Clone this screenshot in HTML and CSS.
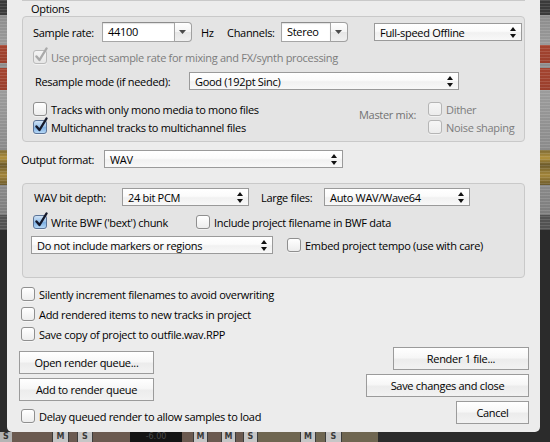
FILE: index.html
```html
<!DOCTYPE html>
<html>
<head>
<meta charset="utf-8">
<link rel="stylesheet" href="styles.css">
</head>
<body>
<div class="screen">
  <div class="bg-left"></div>
  <div class="bg-right"></div>
  <div class="bg-bottom">
    <span class="seg s-gray w12">S</span>
    <span class="seg s-brown w40"></span>
    <span class="seg s-btn w17">M</span>
    <span class="seg s-brown w8"></span>
    <span class="seg s-btn w16">S</span>
    <span class="seg s-brown w37"></span>
    <span class="seg s-black w52">-6.00</span>
    <span class="seg s-brown w11"></span>
    <span class="seg s-btn w15">M</span>
    <span class="seg s-brown w13"></span>
    <span class="seg s-btn w15">M</span>
    <span class="seg s-brown w7"></span>
    <span class="seg s-btn w15">S</span>
    <span class="seg s-olive w42"></span>
    <span class="seg s-btn w16">M</span>
    <span class="seg s-olive w9"></span>
    <span class="seg s-btn w17">S</span>
    <span class="seg s-olive w36"></span>
    <span class="seg s-dark grow"></span>
  </div>

  <div class="dialog">
    <div class="prev-box"></div>
    <div class="group-title">Options</div>
    <div class="group g-options">
      <div class="row r-sr">
        <span class="lbl l-sr">Sample rate:</span>
        <div class="combo c-sr">
          <span class="combo-field">44100</span>
          <span class="combo-btn"><svg width="7" height="4" viewBox="0 0 7 4"><path d="M0 0H7L3.5 4Z" fill="#4a4a4a"/></svg></span>
        </div>
        <span class="lbl l-hz">Hz</span>
        <span class="lbl l-ch">Channels:</span>
        <div class="combo c-ch">
          <span class="combo-field">Stereo</span>
          <span class="combo-btn"><svg width="7" height="4" viewBox="0 0 7 4"><path d="M0 0H7L3.5 4Z" fill="#4a4a4a"/></svg></span>
        </div>
        <div class="popup p-speed"><span class="popup-text">Full-speed Offline</span><svg class="updown" width="6" height="11" viewBox="0 0 6 11"><path d="M0 4L3 0L6 4Z M0 7L3 11L6 7Z" fill="#111"/></svg></div>
      </div>
      <div class="row r-use cbrow dis">
        <span class="cb checked dis"><svg class="check" width="14" height="16" viewBox="0 0 14 16"><path d="M2.5 9.5L5.5 13L12.5 1.5" fill="none" stroke="#a9a9a9" stroke-width="2.4" stroke-linecap="round" stroke-linejoin="round"/></svg></span>
        <span>Use project sample rate for mixing and FX/synth processing</span>
      </div>
      <div class="row r-rs">
        <span class="lbl l-rs">Resample mode (if needed):</span>
        <div class="popup p-rs"><span class="popup-text">Good (192pt Sinc)</span><svg class="updown" width="6" height="11" viewBox="0 0 6 11"><path d="M0 4L3 0L6 4Z M0 7L3 11L6 7Z" fill="#111"/></svg></div>
      </div>
      <div class="mixgrid">
        <div class="cbrow m1"><span class="cb"></span><span>Tracks with only mono media to mono files</span></div>
        <div class="master-lbl">Master mix:</div>
        <div class="cbrow dis m2"><span class="cb dis"></span><span>Dither</span></div>
        <div class="cbrow m3"><span class="cb checked"><svg class="check" width="14" height="16" viewBox="0 0 14 16"><path d="M2.5 9.5L5.5 13L12.5 1.5" fill="none" stroke="#14182a" stroke-width="2.4" stroke-linecap="round" stroke-linejoin="round"/></svg></span><span>Multichannel tracks to multichannel files</span></div>
        <div class="cbrow dis m4"><span class="cb dis"></span><span>Noise shaping</span></div>
      </div>
    </div>

    <div class="row r-out">
      <span class="lbl l-out">Output format:</span>
      <div class="popup p-out"><span class="popup-text">WAV</span><svg class="updown" width="6" height="11" viewBox="0 0 6 11"><path d="M0 4L3 0L6 4Z M0 7L3 11L6 7Z" fill="#111"/></svg></div>
    </div>

    <div class="group g-wav">
      <div class="row r-bd">
        <span class="lbl l-bd">WAV bit depth:</span>
        <div class="popup p-bd"><span class="popup-text">24 bit PCM</span><svg class="updown" width="6" height="11" viewBox="0 0 6 11"><path d="M0 4L3 0L6 4Z M0 7L3 11L6 7Z" fill="#111"/></svg></div>
        <span class="lbl l-lf">Large files:</span>
        <div class="popup p-lf"><span class="popup-text">Auto WAV/Wave64</span><svg class="updown" width="6" height="11" viewBox="0 0 6 11"><path d="M0 4L3 0L6 4Z M0 7L3 11L6 7Z" fill="#111"/></svg></div>
      </div>
      <div class="row r-bwf">
        <div class="cbrow w-bwf"><span class="cb checked"><svg class="check" width="14" height="16" viewBox="0 0 14 16"><path d="M2.5 9.5L5.5 13L12.5 1.5" fill="none" stroke="#14182a" stroke-width="2.4" stroke-linecap="round" stroke-linejoin="round"/></svg></span><span>Write BWF ('bext') chunk</span></div>
        <div class="cbrow"><span class="cb"></span><span>Include project filename in BWF data</span></div>
      </div>
      <div class="row r-mk">
        <div class="popup p-mk"><span class="popup-text">Do not include markers or regions</span><svg class="updown" width="6" height="11" viewBox="0 0 6 11"><path d="M0 4L3 0L6 4Z M0 7L3 11L6 7Z" fill="#111"/></svg></div>
        <div class="cbrow"><span class="cb"></span><span>Embed project tempo (use with care)</span></div>
      </div>
    </div>

    <div class="bottom">
      <div class="col-left">
        <div class="cbrow b1"><span class="cb"></span><span>Silently increment filenames to avoid overwriting</span></div>
        <div class="cbrow b2"><span class="cb"></span><span>Add rendered items to new tracks in project</span></div>
        <div class="cbrow b3"><span class="cb"></span><span>Save copy of project to outfile.wav.RPP</span></div>
        <button class="btn bl1">Open render queue...</button>
        <button class="btn bl2">Add to render queue</button>
        <div class="cbrow b4"><span class="cb"></span><span>Delay queued render to allow samples to load</span></div>
      </div>
      <div class="col-right">
        <button class="btn br1">Render 1 file...</button>
        <button class="btn br2">Save changes and close</button>
        <button class="btn br3">Cancel</button>
      </div>
    </div>
  </div>
</div>
</body>
</html>
```
FILE: styles.css
```css
* { box-sizing: border-box; }
body {
  margin: 0;
  background: #2b2b2b;
  font-family: "Open Sans", "DejaVu Sans", sans-serif;
  font-size: 11px;
  letter-spacing: -0.3px;
  color: #000;
}
.screen {
  position: relative;
  width: 550px;
  height: 442px;
  overflow: hidden;
  background: #2b2b2b;
}

/* background DAW strips */
.bg-left, .bg-right {
  position: absolute;
  top: 0;
  height: 432px;
  background:
    repeating-linear-gradient(180deg, rgba(255,255,255,0.12) 0 1px, transparent 1px 3px) 0 0 / 100% 230px no-repeat,
    linear-gradient(180deg,
      #3a3a3a 0, #3a3a3a 15px,
      #8c8c8c 15px, #9a9a9a 45px,
      #a44430 45px, #9a3f2c 63px,
      #8e8e8e 63px, #8e8e8e 68px,
      #a44430 68px, #9a3f2c 90px,
      #9c9c9c 90px, #8a8a8a 150px,
      #7d6a35 150px, #b0903c 158px, #6b5a2c 165px, #a4863a 175px, #6b5a2c 185px,
      #8a8a8a 185px, #7c7c7c 215px,
      #525252 215px, #525252 230px,
      #2b2b2b 230px, #2b2b2b 432px);
}
.bg-left { left: 0; width: 7px; }
.bg-right { left: 540px; width: 10px; }
.bg-bottom {
  position: absolute;
  left: 0;
  top: 432px;
  width: 550px;
  height: 10px;
  display: flex;
  overflow: hidden;
}
.seg {
  display: block;
  height: 10px;
  font: bold 8px/10px "DejaVu Sans", sans-serif;
  letter-spacing: 0;
  text-align: center;
  color: #2a2a2a;
  overflow: hidden;
}
.s-gray { background: #b4b4b4; color: #333; }
.s-brown { background: #6b5a50; }
.s-btn { background: #c6c6c6; border-left: 1px solid #3c3c3c; border-right: 1px solid #3c3c3c; color: #3a3a3a; }
.s-black { background: #141414; color: #4a4a4a; font-weight: normal; }
.s-olive { background: #6f6651; }
.s-dark { background: #2b2b2b; }
.w7 { width: 7px; } .w8 { width: 8px; } .w9 { width: 9px; } .w11 { width: 11px; }
.w12 { width: 12px; } .w13 { width: 13px; } .w15 { width: 15px; } .w16 { width: 16px; }
.w17 { width: 17px; } .w36 { width: 36px; } .w37 { width: 37px; } .w40 { width: 40px; }
.w42 { width: 42px; } .w52 { width: 52px; }
.grow { flex: 1; }

/* dialog */
.dialog {
  position: relative;
  margin-left: 7px;
  width: 533px;
  height: 432px;
  background: #ececec;
  border-radius: 0 0 5px 5px;
  display: flex;
  flex-direction: column;
}
.prev-box {
  margin: 0 15px;
  height: 1px;
  background: #c9c9c9;
}
.group-title {
  height: 15px;
  padding-left: 9px;
  line-height: 15px;
  margin-left: 15px;
}
.group {
  margin: 0 15px;
  background: #e4e4e4;
  border: 1px solid #c9c9c9;
  border-radius: 4px;
}
.row {
  display: flex;
  align-items: center;
}
.lbl { white-space: nowrap; }

/* Options group */
.g-options { padding: 5px 0 7px 10px; height: 126px; }
.r-sr { height: 20px; }
.l-sr { width: 69px; }
.l-hz { width: 26px; margin-left: 9px; }
.l-ch { width: 54px; }
.combo {
  display: flex;
  height: 20px;
}
.combo-field {
  flex: 1;
  background: #fff;
  border: 1px solid #a6a6a6;
  border-top-color: #8c8c8c;
  box-shadow: inset 0 1px 1px rgba(0,0,0,0.12);
  padding-left: 5px;
  line-height: 18px;
}
.combo-btn {
  width: 17px;
  border: 1px solid #a0a0a0;
  border-left: none;
  border-radius: 0 4px 4px 0;
  background: linear-gradient(180deg, #ffffff 0%, #f4f4f4 50%, #e6e6e6 51%, #f0f0f0 100%);
  display: flex;
  align-items: center;
  justify-content: center;
  padding-right: 1px;
}
.c-sr { width: 90px; }
.c-ch { width: 67px; }

.popup {
  position: relative;
  height: 18px;
  border: 1px solid #9a9a9a;
  background: linear-gradient(180deg, #ffffff 0%, #fbfbfb 45%, #f1f1f1 55%, #f8f8f8 100%);
  display: flex;
  align-items: center;
  padding-left: 5px;
  white-space: nowrap;
}
.popup-text { flex: 1; }
.updown { margin-right: 5px; }
.p-speed { width: 148px; margin-left: 26px; }

.r-use { height: 14px; margin-top: 8px; }
.r-rs { height: 18px; margin-top: 8px; }
.l-rs { width: 156px; padding-left: 2px; }
.p-rs { width: 270px; }

.mixgrid {
  margin-top: 12px;
  display: grid;
  grid-template-columns: 326px 69px auto;
  grid-template-rows: 14px 14px;
  row-gap: 4px;
}
.m1 { grid-column: 1; grid-row: 1; }
.master-lbl { grid-column: 2; grid-row: 1 / span 2; align-self: center; color: #727272; margin-bottom: 7px; }
.m2 { grid-column: 3; grid-row: 1; }
.m3 { grid-column: 1; grid-row: 2; }
.m4 { grid-column: 3; grid-row: 2; }

/* checkboxes */
.cbrow {
  display: flex;
  align-items: center;
  height: 14px;
  white-space: nowrap;
}
.cbrow.dis { color: #7c7c7c; }
.cb {
  position: relative;
  flex: none;
  width: 14px;
  height: 14px;
  margin-right: 4px;
  border: 1px solid #8f8f8f;
  border-radius: 3px;
  background: linear-gradient(180deg, #ffffff 0%, #f6f6f6 50%, #ededed 100%);
  box-shadow: 0 1px 0 rgba(255,255,255,0.5);
}
.cb.dis {
  border-color: #b5b5b5;
  background: linear-gradient(180deg, #f6f6f6, #ececec);
}
.cb.checked {
  border-color: #5b7397;
  background: linear-gradient(180deg, #cfe2f5 0%, #9cc3ea 45%, #7fb0e3 55%, #b6d8f6 100%);
}
.cb.checked.dis {
  border-color: #b9b9b9;
  background: linear-gradient(180deg, #f4f4f4, #e6e6e6);
}
.check {
  position: absolute;
  left: 0;
  top: -4px;
}

/* output format */
.r-out { height: 18px; margin-top: 8px; padding-left: 14px; }
.l-out { width: 83px; }
.p-out { width: 239px; }

/* WAV group */
.g-wav { margin-top: 15px; padding: 4px 0 0 10px; height: 95px; }
.r-bd { height: 18px; }
.l-bd { width: 89px; padding-left: 1px; }
.p-bd { width: 127px; }
.l-lf { width: 63px; margin-left: 12px; }
.p-lf { width: 146px; }
.r-bwf { height: 14px; margin-top: 9px; }
.w-bwf { width: 163px; }
.r-mk { height: 18px; margin-top: 7px; margin-left: -2px; }
.p-mk { width: 242px; margin-right: 14px; }

/* bottom section */
.bottom {
  flex: 1;
  display: flex;
  justify-content: space-between;
  padding: 0 11px 8px 12px;
}
.col-left {
  display: flex;
  flex-direction: column;
  align-items: flex-start;
}
.b1 { margin-top: 9px; margin-left: 2px; }
.b2 { margin-top: 6px; margin-left: 2px; }
.b3 { margin-top: 6px; margin-left: 2px; }
.b4 { margin-top: 8px; margin-left: 2px; }
.btn {
  font: inherit;
  letter-spacing: inherit;
  color: #000;
  margin: 0;
  padding: 0;
  height: 23px;
  border: 1px solid #9b9b9b;
  border-radius: 0;
  background: linear-gradient(180deg, #ffffff 0%, #f7f7f7 45%, #ececec 55%, #f2f2f2 100%);
  text-align: center;
}
.bl1 { width: 135px; margin-top: 10px; }
.bl2 { width: 135px; margin-top: 4px; }
.col-right {
  display: flex;
  flex-direction: column;
  align-items: flex-end;
  justify-content: flex-end;
}
.br1 { width: 136px; }
.br2 { width: 163px; margin-top: 4px; }
.br3 { width: 73px; margin-top: 4px; }
```
